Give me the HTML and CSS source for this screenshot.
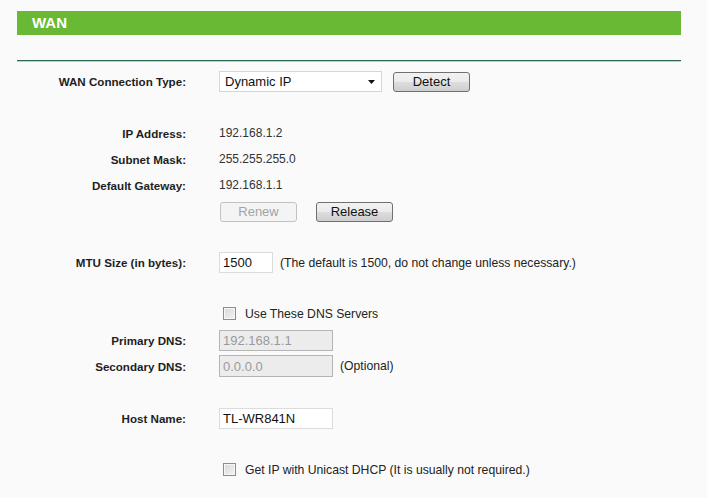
FILE: index.html
```html
<html>
<head>
  <meta charset="UTF-8">
  <title>WAN</title>
  <link rel="stylesheet" href="styles.css">
</head>
<body>
  <div class="page">
    <div class="title-bar">WAN</div>
    <div class="rule"></div>

    <form class="wan-form">
      <div class="row row-type">
        <label class="label">WAN Connection Type:</label>
        <div class="field">
          <div class="select">
            <span>Dynamic IP</span>
            <svg width="7" height="4" viewBox="0 0 7 4"><path d="M0 0 L7 0 L3.5 4 Z" fill="#111"/></svg>
          </div>
          <button type="button" class="btn btn-detect">Detect</button>
        </div>
      </div>

      <div class="row row-info row-first">
        <label class="label">IP Address:</label>
        <div class="field value">192.168.1.2</div>
      </div>
      <div class="row row-info">
        <label class="label">Subnet Mask:</label>
        <div class="field value">255.255.255.0</div>
      </div>
      <div class="row row-info">
        <label class="label">Default Gateway:</label>
        <div class="field value">192.168.1.1</div>
      </div>
      <div class="row row-buttons">
        <div class="label"></div>
        <div class="field">
          <button type="button" class="btn btn-renew" disabled>Renew</button>
          <button type="button" class="btn btn-release">Release</button>
        </div>
      </div>

      <div class="row row-mtu">
        <label class="label">MTU Size (in bytes):</label>
        <div class="field">
          <input type="text" class="text-input input-mtu" value="1500">
          <span class="note">(The default is 1500, do not change unless necessary.)</span>
        </div>
      </div>

      <div class="row row-check row-dns-check">
        <div class="label"></div>
        <div class="field">
          <input type="checkbox" class="check">
          <span class="check-text">Use These DNS Servers</span>
        </div>
      </div>
      <div class="row row-dns row-primary">
        <label class="label">Primary DNS:</label>
        <div class="field">
          <input type="text" class="text-input input-wide" value="192.168.1.1" disabled>
        </div>
      </div>
      <div class="row row-dns row-secondary">
        <label class="label">Secondary DNS:</label>
        <div class="field">
          <input type="text" class="text-input input-wide" value="0.0.0.0" disabled>
          <span class="note">(Optional)</span>
        </div>
      </div>

      <div class="row row-host">
        <label class="label">Host Name:</label>
        <div class="field">
          <input type="text" class="text-input input-wide" value="TL-WR841N">
        </div>
      </div>

      <div class="row row-check row-unicast">
        <div class="label"></div>
        <div class="field">
          <input type="checkbox" class="check">
          <span class="check-text">Get IP with Unicast DHCP (It is usually not required.)</span>
        </div>
      </div>
    </form>
  </div>
</body>
</html>
```

FILE: styles.css
```css
body {
  margin: 0;
  background-color: #fafafa;
  font-family: "Liberation Sans", Arial, sans-serif;
  font-size: 12px;
  color: #222;
}

.page {
  width: 664px;
  padding: 11px 0 0 17px;
}

.title-bar {
  height: 24px;
  line-height: 24px;
  padding-left: 15px;
  background-color: #69b934;
  color: #fff;
  font-size: 15px;
  font-weight: bold;
}

.rule {
  margin-top: 25px;
  height: 1px;
  background-color: #2f6759;
  border-bottom: 1px solid #b9cfc8;
}

.wan-form {
  margin: 0 0 0 -17px;
}

.row {
  display: flex;
  align-items: center;
  height: 21px;
}

.label {
  width: 186px;
  margin-right: 33px;
  text-align: right;
  font-size: 11.6px;
  font-weight: bold;
  color: #1e1e1e;
  flex-shrink: 0;
}

.field {
  display: flex;
  align-items: center;
}

.value {
  color: #333;
}

.row-type {
  margin-top: 9px;
}

.row-info {
  height: 26px;
}

.row-first {
  margin-top: 28px;
}

.row-buttons {
  margin-top: 1px;
  height: 25px;
}

.row-mtu {
  margin-top: 28px;
}

.row-dns-check {
  margin-top: 30px;
}

.row-primary {
  margin-top: 6px;
}

.row-secondary {
  margin-top: 4px;
  height: 22px;
}

.row-secondary .text-input {
  height: 22px;
}

.row-host {
  margin-top: 31px;
}

.row-unicast {
  margin-top: 30px;
}

.select {
  box-sizing: border-box;
  width: 163px;
  height: 21px;
  padding: 0 6px 0 5px;
  display: flex;
  align-items: center;
  justify-content: space-between;
  background-color: #fff;
  border: 1px solid #d6d6d6;
  font-size: 13px;
  color: #111;
}

.btn {
  box-sizing: border-box;
  width: 77px;
  height: 20px;
  padding: 0;
  font-family: "Liberation Sans", Arial, sans-serif;
  font-size: 13px;
  color: #111;
  border: 1px solid #707070;
  border-radius: 3px;
  background: linear-gradient(#f2f2f2, #ebebeb 50%, #dddddd 51%, #cfcfcf);
}

.btn-detect {
  margin-left: 11px;
}

.btn-renew {
  margin-left: 1px;
  border-color: #c2c2c2;
  color: #a3a3a3;
  background: #f4f4f4;
}

.btn-release {
  margin-left: 19px;
}

.text-input {
  box-sizing: border-box;
  height: 21px;
  padding: 0 3px;
  margin: 0;
  font-family: "Liberation Sans", Arial, sans-serif;
  font-size: 13px;
  color: #111;
  background-color: #fff;
  border: 1px solid #dcdcdc;
  outline: none;
}

.text-input:disabled {
  background-color: #ececec;
  border-color: #b5b5b5;
  color: #9a9a9a;
}

.input-mtu {
  width: 54px;
}

.input-wide {
  width: 114px;
}

.note {
  margin-left: 7px;
  font-size: 12.2px;
  color: #222;
}

.check {
  appearance: none;
  -webkit-appearance: none;
  box-sizing: border-box;
  width: 13px;
  height: 13px;
  margin: 0 9px 0 4px;
  border: 1px solid #8d8d8d;
  background: linear-gradient(135deg, #d8d8d8, #f4f4f4);
  box-shadow: inset 0 0 0 1px #f7f7f7;
}

.check-text {
  font-size: 12.2px;
  color: #222;
}
```
